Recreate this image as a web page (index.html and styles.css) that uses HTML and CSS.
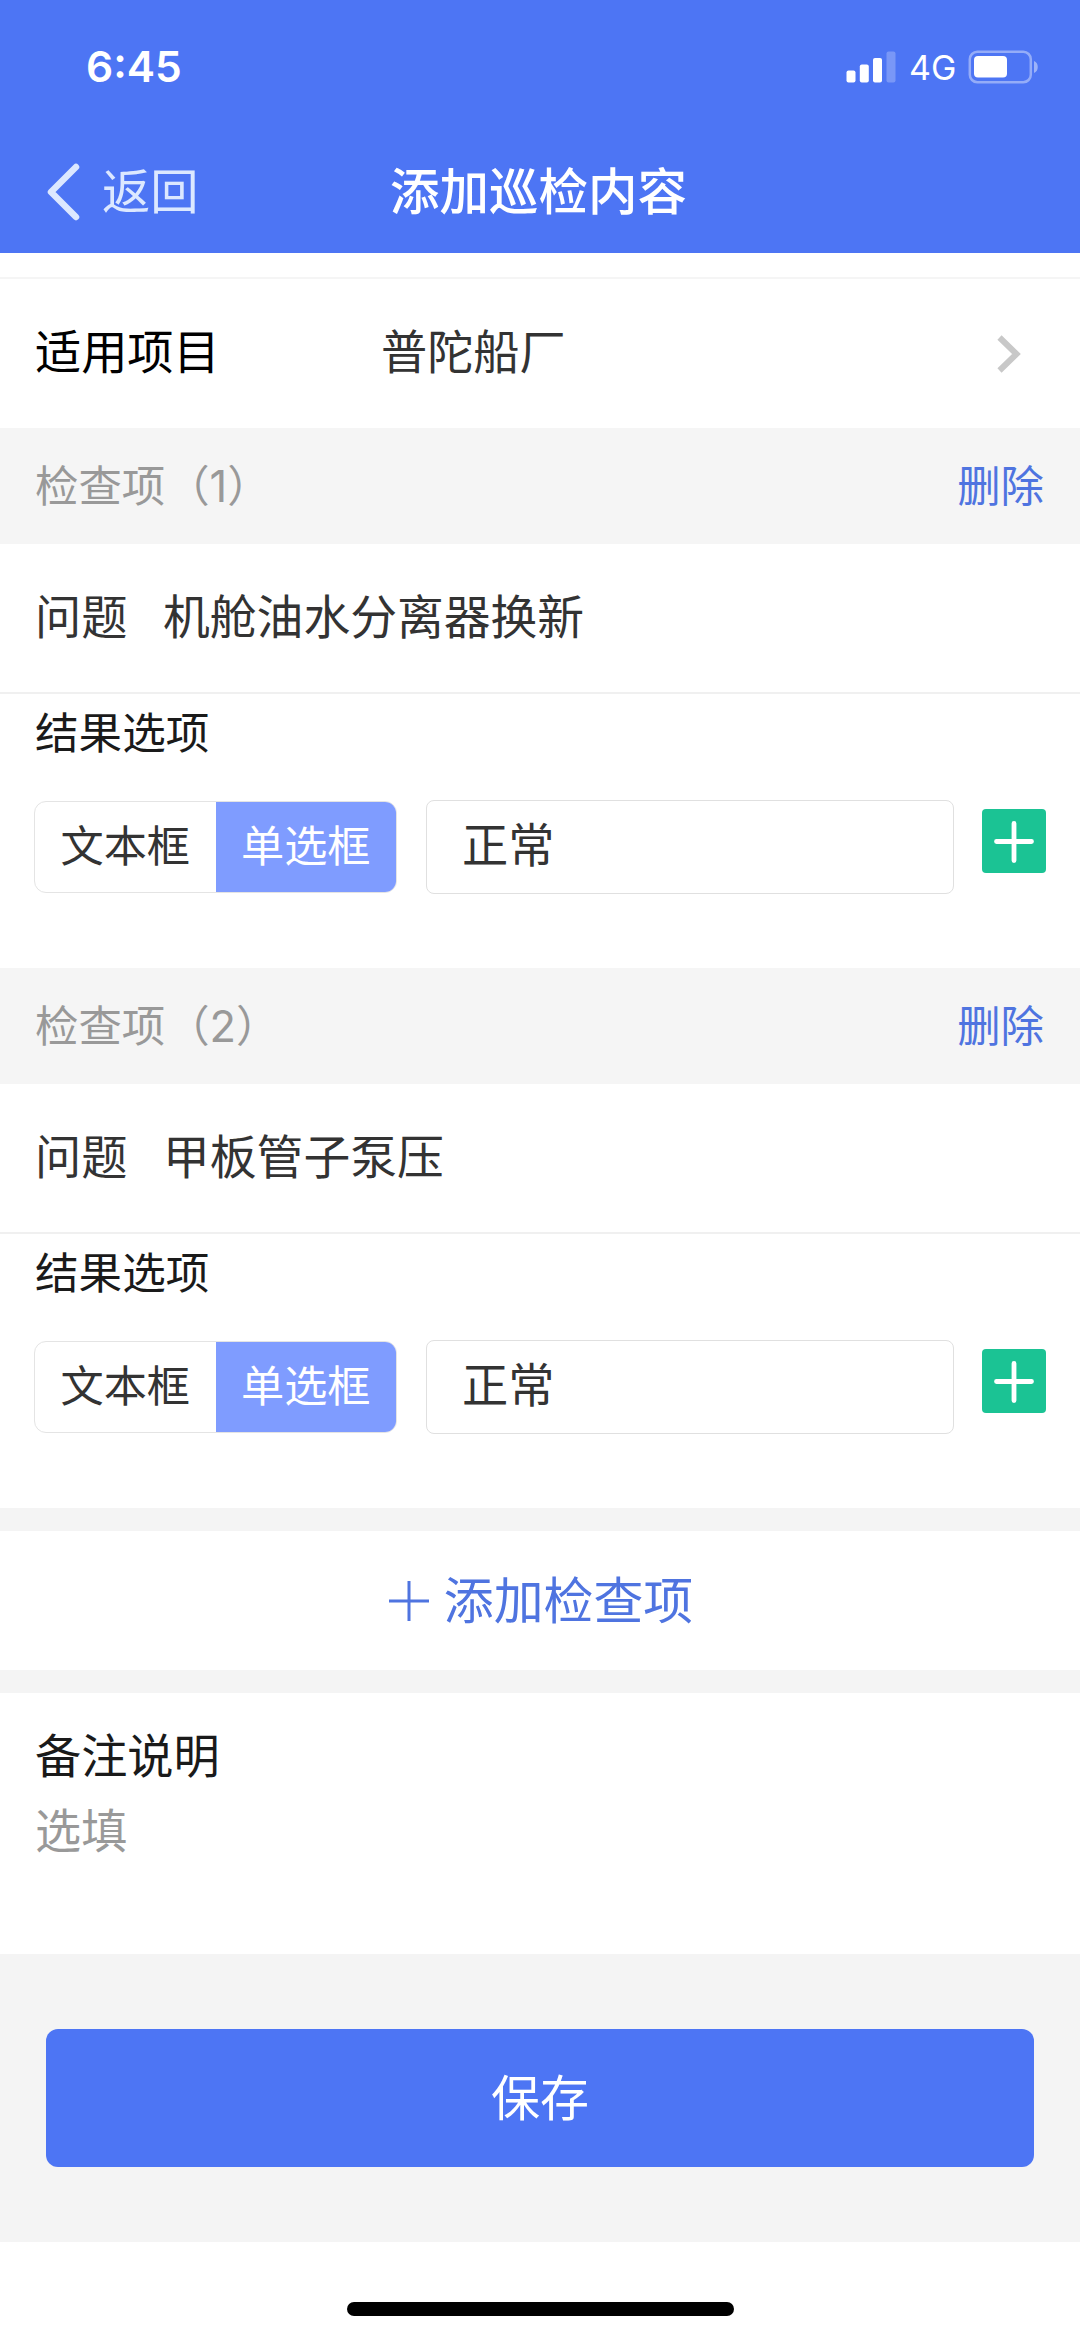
FILE: index.html
```html
<!DOCTYPE html>
<html lang="zh-CN">
<head>
<meta charset="utf-8">
<title>添加巡检内容</title>
<link rel="stylesheet" href="styles.css">
</head>
<body>
<header class="header">
  <div class="status">
    <span class="time">6:45</span>
    <svg class="signal" width="50" height="32" viewBox="0 0 50 32" fill="#fff">
      <rect x="0.5" y="19.5" width="9" height="12" rx="2"/>
      <rect x="13.8" y="13.5" width="9" height="18" rx="2"/>
      <rect x="27" y="7" width="9" height="24.5" rx="2"/>
      <rect x="40.5" y="0.5" width="9" height="31" rx="2" opacity=".25"/>
    </svg>
    <span class="network">4G</span>
    <svg class="battery" width="72" height="34" viewBox="0 0 72 34">
      <rect x="1.8" y="1.8" width="61" height="30.4" rx="7.5" fill="none" stroke="#fff" stroke-width="2.5" opacity=".4"/>
      <rect x="6" y="6" width="33" height="21.5" rx="4" fill="#fff"/>
      <path d="M66 11c5 1.500 5 10.500 0 12z" fill="#fff" opacity=".45"/>
    </svg>
  </div>
  <nav class="nav">
    <a class="back">
      <svg width="36" height="60" viewBox="0 0 36 60" fill="none" stroke="#dce8ff" stroke-width="6.500" stroke-linecap="round" stroke-linejoin="round"><path d="M31 5 6 30 31 55"/></svg>
      <span>返回</span>
    </a>
    <h1 class="title">添加巡检内容</h1>
  </nav>
</header>
<main>
  <section class="project">
    <span class="project-label">适用项目</span>
    <span class="project-value">普陀船厂</span>
    <svg width="26" height="40" viewBox="0 0 26 40" fill="none" stroke="#c8c8c8" stroke-width="6"><path d="M2.500 3.500 19.500 20 2.500 36.500"/></svg>
  </section>

  <section class="check">
    <div class="check-head"><span>检查项<span class="index">（1）</span></span><a class="delete">删除</a></div>
    <div class="question"><span class="question-label">问题</span><span class="question-text">机舱油水分离器换新</span></div>
    <div class="result">
      <div class="result-label">结果选项</div>
      <div class="options">
        <div class="toggle"><span class="toggle-item">文本框</span><span class="toggle-item active">单选框</span></div>
        <div class="field">正常</div>
        <svg class="plus" width="64" height="64" viewBox="0 0 64 64"><rect width="64" height="64" rx="4" fill="#1bc394"/><path d="M32 14.500v37M14.500 32.500h35" stroke="#fff" stroke-width="4.800" stroke-linecap="round"/></svg>
      </div>
    </div>
  </section>

  <section class="check">
    <div class="check-head"><span>检查项<span class="index">（2）</span></span><a class="delete">删除</a></div>
    <div class="question"><span class="question-label">问题</span><span class="question-text">甲板管子泵压</span></div>
    <div class="result">
      <div class="result-label">结果选项</div>
      <div class="options">
        <div class="toggle"><span class="toggle-item">文本框</span><span class="toggle-item active">单选框</span></div>
        <div class="field">正常</div>
        <svg class="plus" width="64" height="64" viewBox="0 0 64 64"><rect width="64" height="64" rx="4" fill="#1bc394"/><path d="M32 14.500v37M14.500 32.500h35" stroke="#fff" stroke-width="4.800" stroke-linecap="round"/></svg>
      </div>
    </div>
  </section>

  <div class="add">
    <svg width="40" height="40" viewBox="0 0 40 40" stroke="#4f74e0" stroke-width="3"><path d="M20 0v40M0 20h40"/></svg>
    <span>添加检查项</span>
  </div>

  <section class="remark">
    <div class="remark-label">备注说明</div>
    <div class="remark-input">选填</div>
  </section>

  <div class="actions"><div class="save">保存</div></div>
</main>
<footer class="home"><div class="home-bar"></div></footer>
</body>
</html>
```
FILE: styles.css
```css
* { box-sizing: border-box; }
body {
  margin: 0;
  width: 1080px;
  height: 2339px;
  background: #fff;
  color: #333;
  font-family: Inter, "Noto Sans CJK SC", sans-serif;
  font-size: 46.200px;
  line-height: 60px;
}
svg { display: block; flex: none; }

.header { height: 253px; background: #4d75f4; color: #fff; }
.status { display: flex; align-items: center; height: 133px; padding: 0 40px 0 86px; }
.time { margin-right: auto; font-size: 42.500px; font-weight: 600; }
.signal { margin-right: 13px; }
.network { width: 59px; font-size: 34px; font-weight: 400; line-height: 62px; padding-top: 2px; }
.nav { display: grid; grid-template-columns: 390px 300px 1fr; align-items: center; height: 117px; }
.back { display: flex; align-items: center; gap: 21px; padding-left: 45px; color: #dce8ff; font-size: 48.300px; }
.title { margin: 0; font-size: 49.500px; font-weight: 500; white-space: nowrap; }

.project { display: flex; align-items: center; height: 151px; margin-top: 24px; padding: 0 57px 4px 35px; border-top: 2px solid #f5f5f5; }
.project-label { width: 346px; color: #000; }
.project-value { flex: 1; }
.project svg { margin-top: 4px; }

.check { height: 540px; }
.check-head { display: flex; justify-content: space-between; align-items: center; height: 116px; padding: 0 36px 1px 35px; background: #f5f5f5; color: #999; font-size: 43.400px; }
.index { margin-left: 1px; }
.delete { color: #4f74e0; }
.question { display: flex; align-items: center; height: 150px; padding: 0 35px 3px; border-bottom: 2px solid #f0f0f0; }
.question-label { width: 128px; }
.question-text { font-size: 46.800px; }
.result { padding: 10px 34px 0; }
.result-label { height: 60px; padding-left: 1px; color: #1a1a1a; font-size: 43.600px; }
.options { display: flex; align-items: flex-start; margin-top: 36px; }
.toggle { display: flex; width: 363px; height: 92px; margin-top: 1px; border: 1px solid #e4e4e4; border-radius: 12px; overflow: hidden; font-size: 43.200px; line-height: 89px; text-align: center; }
.toggle-item { flex: 1; }
.active { background: #7f9cff; color: #fff; }
.field { width: 528px; height: 94px; margin-left: 29px; padding-left: 35px; border: 1px solid #e0e0e0; border-radius: 8px; line-height: 89px; }
.plus { margin: 9px 0 0 28px; }

.add { display: flex; justify-content: center; align-items: center; gap: 15px; height: 185px; padding-left: 2px; border: solid #f4f4f4; border-width: 23px 0; color: #4f74e0; font-size: 49.900px; line-height: 58px; }

.remark { height: 261px; padding: 33px 35px 0; }
.remark-label { color: #1a1a1a; }
.remark-input { margin-top: 15px; color: #999; }

.actions { height: 288px; padding: 75px 46px 0; background: #f4f4f4; }
.save { height: 138px; border-radius: 12px; background: #4d75f4; color: #fff; font-size: 49px; line-height: 139px; text-align: center; }

.home { display: flex; justify-content: center; padding-top: 60px; }
.home-bar { width: 387px; height: 14px; border-radius: 7px; background: #000; }
```
